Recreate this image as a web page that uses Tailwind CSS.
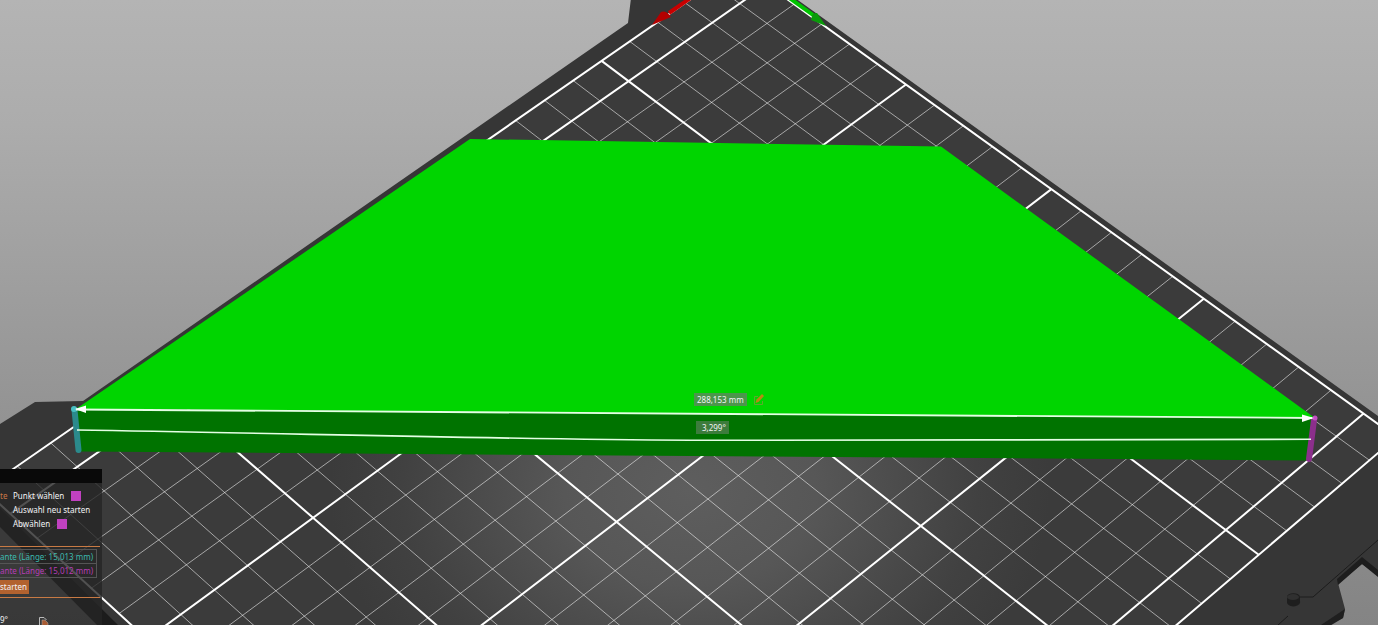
<!DOCTYPE html>
<html lang="de">
<head>
  <meta charset="UTF-8" />
  <title>Messen</title>
  <meta name="viewport" content="width=device-width, initial-scale=1.0" />
  <script src="https://cdn.jsdelivr.net/npm/@tailwindcss/browser@4"></script>
</head>
<body class="relative h-screen overflow-hidden bg-[#8a8a8a] font-['Noto_Sans',sans-serif] text-[8px] leading-[14px] text-gray-100">

  <!-- 3D view -->
  <main class="h-full w-full">
    <svg class="block h-full w-full" viewBox="0 0 1378 625" preserveAspectRatio="xMidYMid slice">
      <defs>
        <linearGradient id="sky" x1="0" y1="0" x2="0" y2="1">
          <stop offset="0" stop-color="#b4b4b4" />
          <stop offset="0.2" stop-color="#acacac" />
          <stop offset="0.65" stop-color="#949494" />
          <stop offset="1" stop-color="#848484" />
        </linearGradient>
        <radialGradient id="glow" gradientUnits="userSpaceOnUse" cx="0" cy="0" r="1" gradientTransform="translate(690 490) scale(360 270)">
          <stop offset="0" stop-color="#5e5e5e" />
          <stop offset="0.35" stop-color="#575757" />
          <stop offset="0.8" stop-color="#414141" />
          <stop offset="1" stop-color="#3b3b3b" />
        </radialGradient>
      </defs>
      <rect width="1378" height="625" fill="url(#sky)" />

      <!-- Bed body -->
      <path d="M631 -2 628 23 83 401 35 402 0 424V526L98 625H1328L1343 618 1345 609 1338 583 1362 564 1378 575V416L795 -2Z" fill="#363636" />
      <path d="M0 508 118 625H97L0 527Z" fill="#1c1c1c" />
      <path d="M1337 579 1362 557 1378 570V577L1362 564 1338 585Z" fill="#1d1d1d" />
      <path d="M1345 609 1343 618 1328 627H1318L1342 611Z" fill="#1f1f1f" />
      <path d="M1378 540 1313 597H1300M1288 616 1278 625" fill="none" stroke="#1c1c1c" />
      <path d="M1287 597a6 3.500 0 0 1 13 0v4a6 4 0 0 1-13 2Z" fill="#1e1e1e" />
      <ellipse cx="1293" cy="597" rx="6" ry="3" fill="#303030" />

      <path id="plate" fill="url(#glow)" />
      <path id="minor" fill="none" stroke="#fff" stroke-opacity="0.55" />
      <path id="major" fill="none" stroke="#fff" stroke-width="2" />

      <!-- Axes -->
      <path d="M692 -3 669 13" stroke="#c80000" stroke-width="4" />
      <path d="M652 25 661 12Q666 10 671 17Z" fill="#b40000" />
      <path d="M788 -3 813 15" stroke="#00c400" stroke-width="4" />
      <path d="M826 26 817 13Q812 12 811 20Z" fill="#0a9a0a" />

      <!-- Model -->
      <path d="M470 139 941 146.500 1315 418 76 409Z" fill="#00d500" />
      <path d="M76 409 1315 418 1308 460.500 80 451.500Z" fill="#007300" />

      <!-- Selected edges -->
      <path d="M74.500 410 78.500 450" stroke="#2b8a8c" stroke-width="6" stroke-linecap="round" />
      <circle cx="74" cy="409" r="3" fill="#48c0c4" />
      <path d="M1314 420 1309 459" stroke="#8c2f8c" stroke-width="6" stroke-linecap="round" />
      <circle cx="1315" cy="418" r="2.500" fill="#c34fc3" />

      <!-- Dimension lines -->
      <path d="M76 409.500 1312 418" stroke="#e4ffe4" stroke-width="1.800" />
      <path d="M75 409 86 405.500V413ZM1314 418 1302 414.500V422Z" fill="#fff" />
      <path d="M77 430C280 433 480 439 690 440.300 900 440.800 1100 439 1311 439.300" fill="none" stroke="#e4ffe4" stroke-width="1.600" />
    </svg>
  </main>

  <!-- Measured values -->
  <div class="absolute top-[393px] left-[694px] flex items-center gap-[6px]">
    <span class="bg-[#4c964c] px-[3px] leading-[13px]">288,153 mm</span>
    <button type="button" aria-label="Skalieren" class="size-3">
      <svg class="size-3" viewBox="0 0 12 12" fill="none">
        <path d="M5 2.500H1.500V10.500H9.500V7" stroke="#5fa82e" />
        <path d="M2.500 9 3.500 5.500 9 0 11 2 5.500 8Z" fill="#b58a12" />
      </svg>
    </button>
  </div>
  <div class="absolute top-[421px] left-[696px] bg-[#3d7c3d] pr-[3px] pl-[6px] leading-[13px]">3,299°</div>

  <!-- Measure panel -->
  <aside class="absolute top-[469px] left-0 w-[102px] bg-[#262626]/80">
    <div class="h-[14px] bg-[#090909]"></div>
    <div class="pt-[6px]">
      <div class="flex items-center">
        <span class="w-[13px] text-[#c87846]">te</span>
        <span>Punkt wählen</span>
        <span class="ml-[7px] size-[10px] bg-[#c041c0]"></span>
      </div>
      <div class="pl-[13px]">Auswahl neu starten</div>
      <div class="flex items-center pl-[13px]">
        <span>Abwählen</span>
        <span class="ml-[7px] size-[10px] bg-[#c041c0]"></span>
      </div>
    </div>
    <div class="mt-[15px] mr-[2px] h-px bg-[#c87a44]"></div>
    <div class="pt-[2px] pr-[5px]">
      <table class="w-full border-collapse text-right whitespace-nowrap">
        <tr><td class="border border-l-0 border-[#555] pr-[3px] leading-[13px] text-[#3cb9ae]">ante (Länge: 15,013 mm)</td></tr>
        <tr><td class="border border-l-0 border-[#555] pr-[3px] leading-[13px] text-[#b73cb7]">ante (Länge: 15,012 mm)</td></tr>
      </table>
    </div>
    <button type="button" class="mt-[2px] block w-[29px] bg-[#b2622f] text-left">starten</button>
    <div class="mt-[3px] mr-[2px] h-px bg-[#c87a44]"></div>
    <div class="flex items-start pt-[18px] leading-[8px]">
      <span class="w-[38px]">9°</span>
      <button type="button" aria-label="Kopieren" class="h-[10px]">
        <svg class="size-3" viewBox="0 0 12 12" fill="none">
          <path d="M1.500 9V1.500H6L8.500 4" stroke="#bbb" />
          <path d="M4 11V4H7L10 7V11Z" fill="#a85c34" stroke="#aaa" stroke-width="0.500" />
        </svg>
      </button>
    </div>
  </aside>

  <script>
    // Bed grid: u and v count 10 mm cells, projected onto the view
    function project(u, v) {
      const w = 1 - 0.004218 * u - 0.004427 * v;
      const x = (766.9 - 30.31 * u + 23.8 * v) / w;
      const y = (-15.46 + 19 * u + 19.62 * v) / w;
      return x.toFixed(1) + ' ' + y.toFixed(1);
    }

    const U = [0, 25], V = [-1, 21];
    let major = '', minor = '';

    for (let u = U[0]; u <= U[1]; u++) {
      const d = 'M' + project(u, V[0]) + 'L' + project(u, V[1]);
      if (u % 5 === 0) major += d; else minor += d;
    }
    for (let v = V[0]; v <= V[1]; v++) {
      const d = 'M' + project(U[0], v) + 'L' + project(U[1], v);
      if (v % 5 === 0 || v === V[0] || v === V[1]) major += d; else minor += d;
    }

    document.getElementById('major').setAttribute('d', major);
    document.getElementById('minor').setAttribute('d', minor);
    document.getElementById('plate').setAttribute('d',
      'M' + project(U[0], V[0]) + 'L' + project(U[1], V[0]) + 'L' + project(U[1], V[1]) + 'L' + project(U[0], V[1]) + 'Z');
  </script>
</body>
</html>
